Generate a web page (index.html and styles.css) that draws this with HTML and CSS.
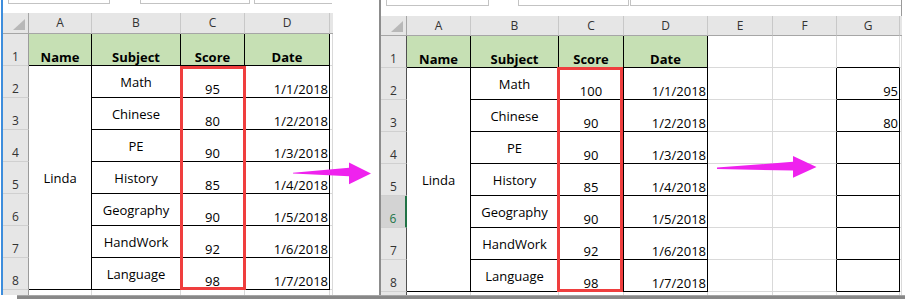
FILE: index.html
```html
<!DOCTYPE html>
<html>
<head>
<meta charset="utf-8">
<link rel="stylesheet" href="styles.css">
</head>
<body>
<div class="page">
  <div class="sheets">
    <div class="sheet sheet-left">
      <div class="topbar">
        <div class="fbox fb1"></div>
        <div class="fbox fb2"></div>
        <div class="fbox fb3"></div>
      </div>
      <div class="grid grid-left">
        <div class="c corner"></div><div class="c ch">A</div><div class="c ch">B</div><div class="c ch">C</div><div class="c ch">D</div><div class="c ch last"></div>

        <div class="c rh">1</div><div class="c b hdr">Name</div><div class="c b hdr">Subject</div><div class="c b hdr">Score</div><div class="c b hdr">Date</div><div class="c"></div>

        <div class="c rh">2</div><div class="c b mid merged">Linda</div><div class="c b mid">Math</div><div class="c b">95</div><div class="c b rt">1/1/2018</div><div class="c"></div>
        <div class="c rh">3</div><div class="c b mid">Chinese</div><div class="c b">80</div><div class="c b rt">1/2/2018</div><div class="c"></div>
        <div class="c rh">4</div><div class="c b mid">PE</div><div class="c b">90</div><div class="c b rt">1/3/2018</div><div class="c"></div>
        <div class="c rh">5</div><div class="c b mid">History</div><div class="c b">85</div><div class="c b rt">1/4/2018</div><div class="c"></div>
        <div class="c rh">6</div><div class="c b mid">Geography</div><div class="c b">90</div><div class="c b rt">1/5/2018</div><div class="c"></div>
        <div class="c rh">7</div><div class="c b mid">HandWork</div><div class="c b">92</div><div class="c b rt">1/6/2018</div><div class="c"></div>
        <div class="c rh">8</div><div class="c b mid">Language</div><div class="c b">98</div><div class="c b rt">1/7/2018</div><div class="c"></div>

        <div class="c rh nb"></div><div class="c nb"></div><div class="c nb"></div><div class="c nb"></div><div class="c nb"></div><div class="c nb"></div>
      </div>
      <div class="redbox red-left"></div>
    </div>

    <div class="sheet sheet-right">
      <div class="topbar">
        <div class="fbox rb1"></div>
        <div class="fbox rb2"></div>
        <div class="fbox rb3"></div>
      </div>
      <div class="grid grid-right">
        <div class="c corner"></div><div class="c ch">A</div><div class="c ch">B</div><div class="c ch">C</div><div class="c ch">D</div><div class="c ch">E</div><div class="c ch">F</div><div class="c ch">G</div><div class="c ch last"></div>

        <div class="c rh">1</div><div class="c b hdr">Name</div><div class="c b hdr">Subject</div><div class="c b hdr">Score</div><div class="c b hdr">Date</div><div class="c"></div><div class="c"></div><div class="c bb"></div><div class="c"></div>

        <div class="c rh">2</div><div class="c b mid merged">Linda</div><div class="c b mid">Math</div><div class="c b">100</div><div class="c b rt">1/1/2018</div><div class="c"></div><div class="c br"></div><div class="c b rt">95</div><div class="c"></div>
        <div class="c rh">3</div><div class="c b mid">Chinese</div><div class="c b">90</div><div class="c b rt">1/2/2018</div><div class="c"></div><div class="c br"></div><div class="c b rt">80</div><div class="c"></div>
        <div class="c rh">4</div><div class="c b mid">PE</div><div class="c b">90</div><div class="c b rt">1/3/2018</div><div class="c"></div><div class="c br"></div><div class="c b"></div><div class="c"></div>
        <div class="c rh">5</div><div class="c b mid">History</div><div class="c b">85</div><div class="c b rt">1/4/2018</div><div class="c"></div><div class="c br"></div><div class="c b"></div><div class="c"></div>
        <div class="c rh sel">6</div><div class="c b mid">Geography</div><div class="c b">90</div><div class="c b rt">1/5/2018</div><div class="c"></div><div class="c br"></div><div class="c b"></div><div class="c"></div>
        <div class="c rh">7</div><div class="c b mid">HandWork</div><div class="c b">92</div><div class="c b rt">1/6/2018</div><div class="c"></div><div class="c br"></div><div class="c b"></div><div class="c"></div>
        <div class="c rh">8</div><div class="c b mid">Language</div><div class="c b">98</div><div class="c b rt">1/7/2018</div><div class="c"></div><div class="c br"></div><div class="c b"></div><div class="c"></div>

        <div class="c rh nb"></div><div class="c nb"></div><div class="c nb"></div><div class="c nb"></div><div class="c nb"></div><div class="c nb"></div><div class="c nb"></div><div class="c nb"></div><div class="c nb"></div>
      </div>
      <div class="redbox red-right"></div>
    </div>
  </div>
  <div class="shadow"></div>

  <svg class="arrows" width="907" height="299" viewBox="0 0 907 299">
    <polygon points="293,172.8 349,167.8 349,162.5 371,173.5 349,184.2 349,176.2 293,173.6" fill="#ef22ee"/>
    <polygon points="717,167.6 793,161.8 793,156 816.5,167 793,177.8 793,170.6 717,169" fill="#ef22ee"/>
  </svg>
</div>
</body>
</html>
```

FILE: styles.css
```css
* { box-sizing: border-box; }

html, body {
  margin: 0;
  padding: 0;
  background: #ffffff;
}

body {
  font-family: "Open Sans", "Noto Sans", sans-serif;
  font-size: 13px;
  color: #000;
}

.page {
  position: relative;
  width: 907px;
  height: 299px;
  overflow: hidden;
}

.sheets {
  display: flex;
  align-items: flex-start;
  gap: 45px;
  height: 295px;
}

.sheet {
  position: relative;
  display: flex;
  flex-direction: column;
}

.sheet-left {
  margin-left: 1px;
  border-left: 2px solid #3d8ddc;
  width: 333px;
  height: 295px;
}

.sheet-right {
  border-left: 2px solid #8c8c8c;
  border-right: 1px solid #9a9a9a;
  width: 523px;
  height: 295px;
}

/* formula-bar remnants at the top */
.topbar {
  display: flex;
  align-items: flex-start;
}
.sheet-left .topbar { height: 13px; }
.sheet-right .topbar { height: 16px; }

.fbox {
  background: #fff;
  border: 1px solid #c3c3c3;
  border-top: none;
}
.fb1 { margin-left: 5px; width: 102px; height: 4px; }
.fb2 { margin-left: 30px; width: 110px; height: 4px; }
.fb3 { margin-left: 4px; width: 78px; height: 4px; border-right: none; }

.rb1 { margin-left: 5px; width: 103px; height: 6px; }
.rb2 { margin-left: 29px; width: 111px; height: 6px; }
.rb3 { margin-left: 1px; flex: 1; height: 6px; border-right: none; }

/* grids */
.grid { display: grid; }

.grid-left {
  grid-template-columns: 26px 63px 89px 64px 85px 3px;
  grid-template-rows: 21px repeat(8, 32px) 5px;
}

.grid-right {
  grid-template-columns: 26px 64px 88px 65px 84px 65px 64px 63px 2px;
  grid-template-rows: 20px repeat(8, 32px) 3px;
}

.c {
  display: flex;
  align-items: flex-end;
  justify-content: center;
  line-height: 16px;
  white-space: nowrap;
  border-right: 1px solid #d9d9d9;
  border-bottom: 1px solid #d9d9d9;
  overflow: hidden;
}

.ch {
  background: #e6e6e6;
  border-right-color: #c8c8c8;
  border-bottom-color: #a6a6a6;
  align-items: center;
  font-size: 12px;
  color: #333;
  line-height: 18px;
}
.ch.last { border-right: none; }

.corner {
  position: relative;
  background: #e6e6e6;
  border-right-color: #a6a6a6;
  border-bottom-color: #a6a6a6;
}
.corner::after {
  content: "";
  position: absolute;
  right: 3px;
  bottom: 3px;
  width: 12px;
  height: 11px;
  background: #b8b8b8;
  clip-path: polygon(100% 0, 100% 100%, 0 100%);
}

.rh {
  background: #e6e6e6;
  border-right-color: #9b9b9b;
  border-bottom-color: #d0d0d0;
  font-size: 12px;
  color: #333;
}
.sheet-right .rh { border-right-color: #505050; }

.rh.sel {
  background: #d3d3d3;
  color: #217346;
  border-right: 2px solid #217346;
}

.b {
  border-right-color: #000;
  border-bottom-color: #000;
}
.bb { border-bottom-color: #000; }
.br { border-right-color: #000; }

.nb { border-bottom: none; }

.hdr {
  background: #c6e0b4;
  font-weight: 700;
}

.mid { align-items: center; line-height: 18px; }
.merged { grid-row: span 7; }
.rt { justify-content: flex-end; padding-right: 1px; }

/* highlight rectangles drawn over the Score column */
.redbox {
  position: absolute;
  border: 3px solid #ef3e3e;
  pointer-events: none;
}
.red-left { left: 177px; top: 66px; width: 66px; height: 224px; }
.red-right { left: 176px; top: 67px; width: 66px; height: 225px; }

.shadow {
  margin-left: 17px;
  width: 888px;
  height: 4px;
  background: linear-gradient(#b4b4b4, #858585 40%, #8a8a8a);
}

.arrows {
  position: absolute;
  left: 0;
  top: 0;
  pointer-events: none;
}
```
